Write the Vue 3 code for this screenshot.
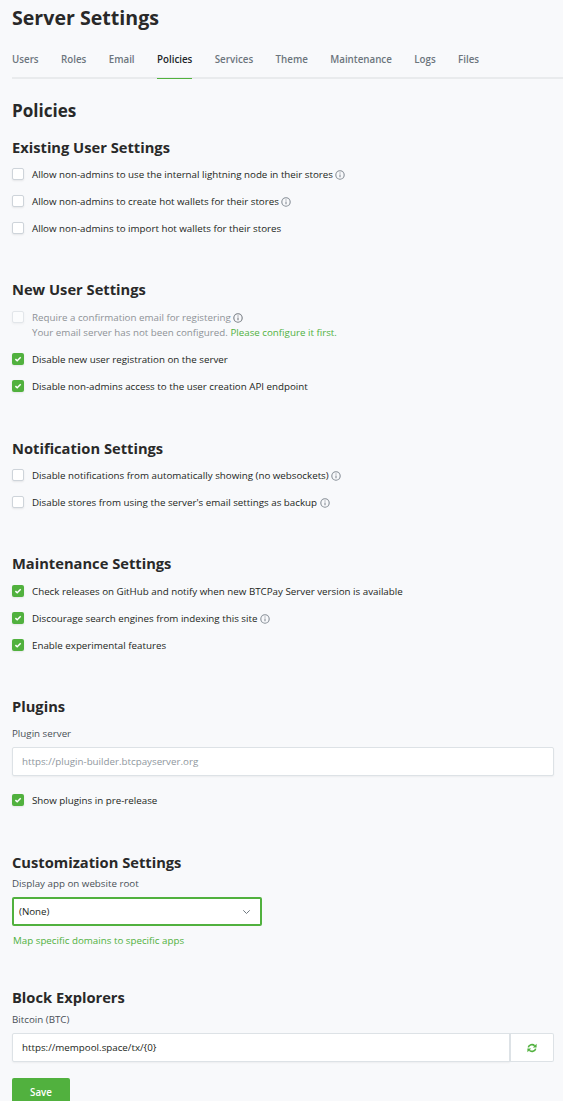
<script setup>
import { ref } from 'vue'

const tabs = ['Users', 'Roles', 'Email', 'Policies', 'Services', 'Theme', 'Maintenance', 'Logs', 'Files']
const activeTab = ref('Policies')

const sections = [
  {
    id: 'existing',
    title: 'Existing User Settings',
    rows: [
      { label: 'Allow non-admins to use the internal lightning node in their stores', info: true },
      { label: 'Allow non-admins to create hot wallets for their stores', info: true },
      { label: 'Allow non-admins to import hot wallets for their stores' },
    ],
  },
  {
    id: 'new-user',
    title: 'New User Settings',
    rows: [
      {
        label: 'Require a confirmation email for registering',
        info: true,
        disabled: true,
        note: 'Your email server has not been configured.',
        link: 'Please configure it first.',
      },
      { label: 'Disable new user registration on the server', checked: true },
      { label: 'Disable non-admins access to the user creation API endpoint', checked: true },
    ],
  },
  {
    id: 'notification',
    title: 'Notification Settings',
    rows: [
      { label: 'Disable notifications from automatically showing (no websockets)', info: true },
      { label: "Disable stores from using the server's email settings as backup", info: true },
    ],
  },
  {
    id: 'maintenance',
    title: 'Maintenance Settings',
    rows: [
      { label: 'Check releases on GitHub and notify when new BTCPay Server version is available', checked: true },
      { label: 'Discourage search engines from indexing this site', info: true, checked: true },
      { label: 'Enable experimental features', checked: true },
    ],
  },
]
</script>

<template>
  <main class="page">
    <h1>Server Settings</h1>
    <nav class="tabs">
      <a v-for="t in tabs" :key="t" :class="{ active: t === activeTab }" @click="activeTab = t">{{ t }}</a>
    </nav>
    <h2>Policies</h2>

    <section v-for="s in sections" :key="s.id" :class="s.id">
      <h3>{{ s.title }}</h3>
      <div v-for="r in s.rows" :key="r.label" class="row" :class="{ disabled: r.disabled }">
        <span class="check" :class="{ on: r.checked }">
          <svg v-if="r.checked" viewBox="0 0 12 12"><path d="M3.4 6.1 5.2 7.8 8.7 4.3" /></svg>
        </span>
        <div class="text">
          <div class="line">
            <span class="label">{{ r.label }}</span>
            <svg v-if="r.info" class="info" viewBox="0 0 10 10">
              <circle cx="5" cy="5" r="4.2" />
              <path d="M5 4.4V7.3M5 2.6V3.6" />
            </svg>
          </div>
          <div v-if="r.note" class="note">{{ r.note }} <a>{{ r.link }}</a></div>
        </div>
      </div>
    </section>

    <section class="plugins">
      <h3>Plugins</h3>
      <label>Plugin server</label>
      <div class="field placeholder">https://plugin-builder.btcpayserver.org</div>
      <div class="row">
        <span class="check on"><svg viewBox="0 0 12 12"><path d="M3.4 6.1 5.2 7.8 8.7 4.3" /></svg></span>
        <div class="text"><div class="line">Show plugins in pre-release</div></div>
      </div>
    </section>

    <section class="custom">
      <h3>Customization Settings</h3>
      <label>Display app on website root</label>
      <div class="select">
        <span>(None)</span>
        <svg viewBox="0 0 10 6"><path d="M1.4 1.1 5 4.7 8.6 1.1" /></svg>
      </div>
      <a class="map">Map specific domains to specific apps</a>
    </section>

    <section class="explorers">
      <h3>Block Explorers</h3>
      <label>Bitcoin (BTC)</label>
      <div class="group">
        <div class="field">https://mempool.space/tx/{0}</div>
        <button class="reset" aria-label="Reset">
          <svg viewBox="0 0 10 10">
            <path class="arc" d="M1.3 4.3A3.7 3.3 0 0 1 7.7 2.7M8.7 5.7A3.7 3.3 0 0 1 2.3 7.3" />
            <path class="tip" d="M9.6.7V4.4H5.8ZM.4 9.3V5.6H4.2Z" />
          </svg>
        </button>
      </div>
    </section>
    <button class="save">Save</button>
  </main>
</template>

<style>
html,
body {
  background: #f8f9fb;
  overflow: hidden;
}
</style>

<style scoped>
.page {
  box-sizing: border-box;
  width: 563px;
  height: 1101px;
  overflow: hidden;
  padding: 4px 0 0 12px;
  background: #f8f9fb;
  color: #1c1f22;
  font-family: "Open Sans", "Noto Sans", sans-serif;
  font-size: 9.78px;
  line-height: 15px;
}
h1, h2, h3 { margin: 0; font-weight: 700; color: #292929; white-space: nowrap; }
h1 { font-size: 19.6px; line-height: 28px; }
h2 { margin-top: 19px; height: 26px; font-size: 17.1px; line-height: 26px; }
h3 { height: 24px; font-size: 14.7px; line-height: 24px; }
a { color: #51b13e; }

.tabs {
  display: flex;
  gap: 22.4px;
  margin-top: 20px;
  height: 27px;
  box-shadow: inset 0 -2px #e9ebed;
}
.tabs a {
  box-sizing: border-box;
  height: 27px;
  color: #6c757d;
  font-weight: 600;
}
.tabs a.active { color: #212529; border-bottom: 1px solid #51b13e; }

section { margin-top: 35px; }
section.existing { margin-top: 11px; }
section.notification { margin-top: 35px; }
section h3 + .row { margin-top: 2px; }
section.new-user h3 + .row,
section.maintenance h3 + .row { margin-top: 3px; }

.row { display: flex; height: 27px; }
.row.disabled { height: 42px; color: #8e9297; }
.new-user + .notification { margin-top: 36px; }
.check {
  box-sizing: border-box;
  flex: none;
  width: 12px;
  height: 12px;
  margin: 7px 8px 0 0;
  border: 1px solid #ced4da;
  border-radius: 2px;
  background: #fff;
  box-shadow: 0 1px 2px rgba(0, 0, 0, 0.08);
}
.disabled .check { opacity: 0.5; }
.check.on { border: 0; background: #51b13e; }
.check svg { display: block; width: 12px; height: 12px; fill: none; stroke: #fff; stroke-width: 1.5; }
.text { padding-top: 6px; white-space: nowrap; }
.line { display: flex; align-items: center; height: 15px; }
.info { width: 10px; height: 10px; margin-left: 2.5px; fill: none; stroke: #868e96; stroke-width: 1.1; }
.disabled .info { stroke: #777d83; }

label { display: block; height: 15px; color: #495057; }
.field {
  box-sizing: border-box;
  width: 542px;
  height: 29px;
  padding-left: 9px;
  border: 1px solid #dde2e6;
  border-radius: 2px;
  background: #fff;
  line-height: 27px;
  box-shadow: 0 1px 2px rgba(0, 0, 0, 0.05);
}
.placeholder { color: #8f979e; }

.plugins label { margin: 8px 0 6px; }
.plugins .row { margin-top: 11px; }

.custom { margin-top: 36px; }
.custom label { margin-top: 2px; }
.select {
  display: flex;
  align-items: center;
  justify-content: space-between;
  box-sizing: border-box;
  width: 250px;
  height: 29px;
  margin-top: 6px;
  padding: 0 9px 0 5px;
  border: 2px solid #51b13e;
  border-radius: 2px;
  background: #fff;
}
.select svg { width: 9px; height: 6px; fill: none; stroke: #6c757d; stroke-width: 1.1; }
.map { display: block; margin: 7px 0 0 1px; }

.explorers { margin-top: 37px; }
.explorers label { margin-top: 3px; }
.group { display: flex; margin-top: 6px; width: 542px; }
.group .field { flex: none; width: 498px; border-radius: 2px 0 0 2px; }
.reset {
  box-sizing: border-box;
  flex: none;
  display: grid;
  place-items: center;
  width: 45px;
  height: 29px;
  margin-left: -1px;
  padding: 0 1px 0 0;
  border: 1px solid #dde2e6;
  border-left-width: 2px;
  border-radius: 0 2px 2px 0;
  background: #fff;
}
.reset svg { width: 10px; height: 10px; }
.arc { fill: none; stroke: #51b13e; stroke-width: 1.6; }
.tip { fill: #51b13e; }

.save {
  display: block;
  width: 58px;
  height: 29px;
  margin-top: 16px;
  padding: 0;
  border: 0;
  border-radius: 2px;
  background: #51b13e;
  color: #fff;
  font: 600 9.78px/29px "Open Sans", "Noto Sans", sans-serif;
}
</style>
